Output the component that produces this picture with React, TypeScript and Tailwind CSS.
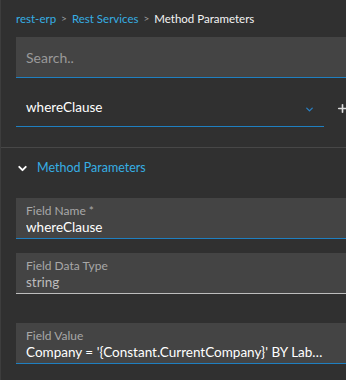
import { ChevronDown, Plus } from 'lucide-react'

const font = { fontFamily: 'Lato, "Open Sans", sans-serif' }

function Field({
    label,
    value,
    accent = true,
    muted = false,
}: {
    label: string
    value: string
    accent?: boolean
    muted?: boolean
}) {
    return (
        <div
            className={`bg-[#444444] h-[41px] pl-[10px] pt-[6px] border-b ${
                accent ? 'border-[#1f7fc0]' : 'border-[#bdbdbd]'
            }`}
        >
            <div className="text-[12px] leading-[14px] text-[#a8a8a8]">{label}</div>
            <div
                className={`text-[13.5px] leading-[18px] truncate ${
                    muted ? 'text-[#bcbcbc]' : 'text-white'
                }`}
            >
                {value}
            </div>
        </div>
    )
}

export default function App() {
    return (
        <div
            className="w-[346px] h-[380px] bg-[#303030] border-l border-[#3d3d3d] overflow-hidden"
            style={font}
        >
            <div className="flex items-center gap-[5px] pl-[15px] pt-[8px] h-[29px] text-[11.5px]">
                <span className="text-[#36aee3]">rest-erp</span>
                <span className="text-[#a0a0a0] text-[10px]">&gt;</span>
                <span className="text-[#36aee3]">Rest Services</span>
                <span className="text-[#a0a0a0] text-[10px]">&gt;</span>
                <span className="text-[#f4f4f4]">Method Parameters</span>
            </div>

            <div className="ml-[15px] mt-[8px] h-[41px] bg-[#444444] border-b border-[#1f7fc0] flex items-center pl-[10px] text-[14px] text-[#9a9a9a]">
                Search..
            </div>

            <div className="flex items-end mt-[9px]">
                <div className="ml-[15px] w-[308px] shrink-0 h-[40px] border-b border-[#1f7fc0] flex items-center pl-[10px] pr-[9px] pt-[2px]">
                    <span className="flex-1 text-[13.5px] text-white">whereClause</span>
                    <ChevronDown size={11} strokeWidth={3} className="text-[#2a7fc0] mt-[4px]" />
                </div>
                <Plus size={13} strokeWidth={3} className="shrink-0 text-[#dddddd] ml-[12px] mb-[12px]" />
            </div>

            <div className="h-px bg-[#474747] mt-[20px]" />

            <div className="flex items-center h-[40px] pl-[15px] gap-[8px]">
                <ChevronDown size={13} strokeWidth={3.5} className="text-white" />
                <span className="text-[12.5px] text-[#36aee3]">Method Parameters</span>
            </div>

            <div className="ml-[15px] mt-[10px] flex flex-col">
                <Field label="Field Name *" value="whereClause" />
                <div className="h-[14px]" />
                <Field label="Field Data Type" value="string" accent={false} muted />
                <div className="h-[29px]" />
                <Field label="Field Value" value="Company = '{Constant.CurrentCompany}' BY Lab…" />
            </div>
        </div>
    )
}
